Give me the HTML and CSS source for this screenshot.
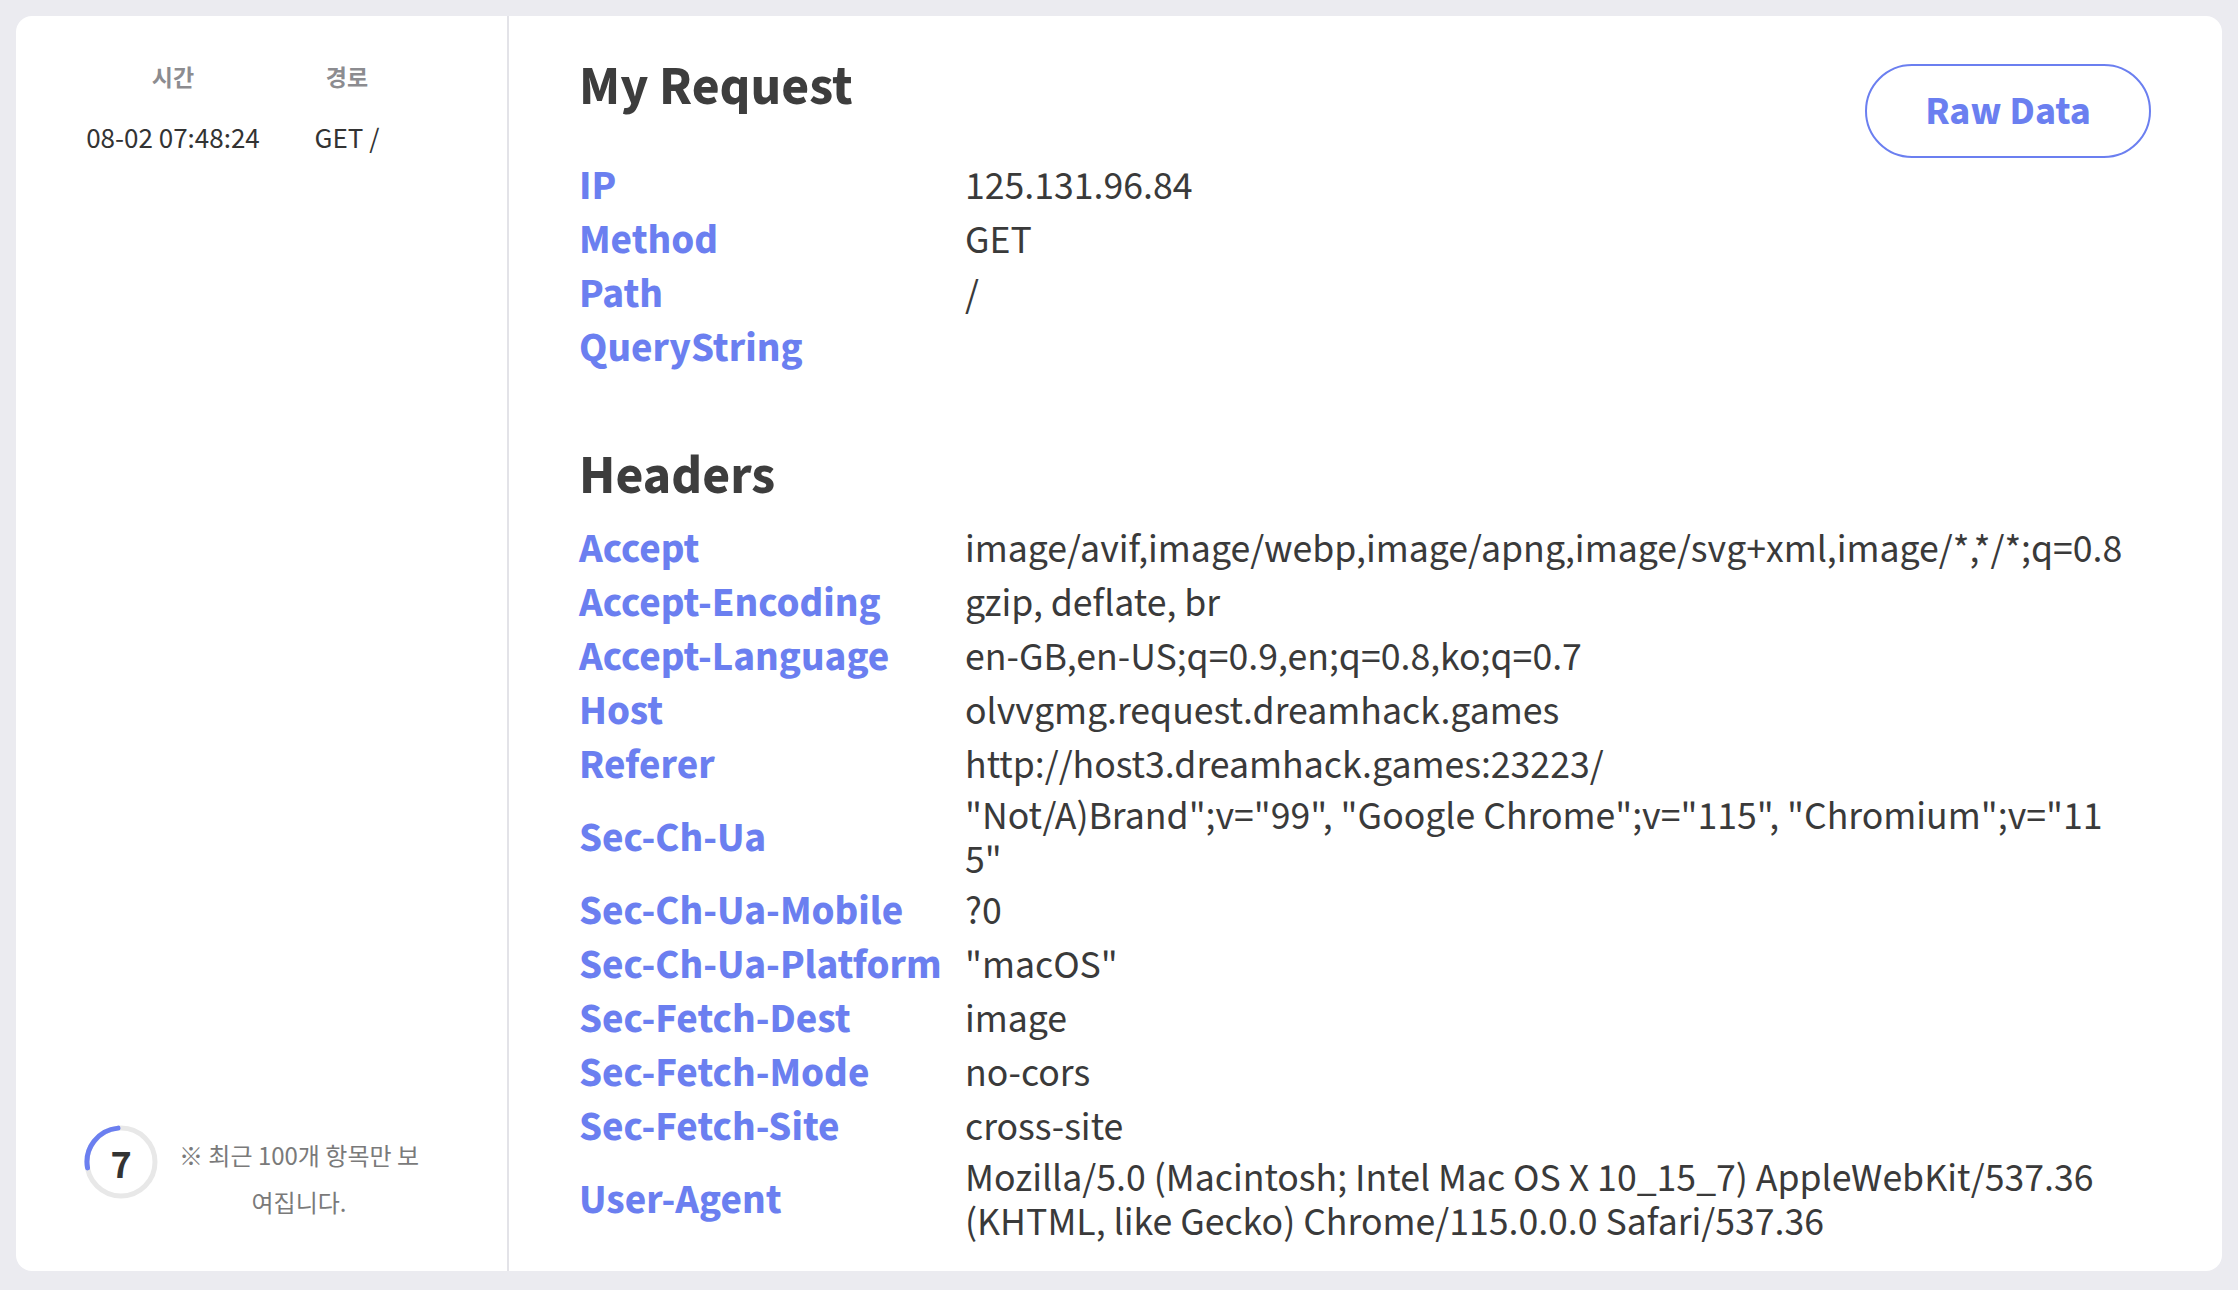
FILE: index.html
```html
<!DOCTYPE html>
<html lang="en">
<head>
<meta charset="utf-8">
<title>My Request</title>
<link rel="stylesheet" href="styles.css">
</head>
<body>
<div class="card">
  <aside class="sidebar">
    <div class="log">
      <div class="log-head">시간</div>
      <div class="log-head">경로</div>
      <div class="log-cell">08-02 07:48:24</div>
      <div class="log-cell">GET /</div>
    </div>
    <div class="foot">
      <div class="timer">
        <svg class="ring" width="76" height="76" viewBox="0 0 76 76">
          <circle cx="38" cy="38" r="34" fill="none" stroke="#e8e8e8" stroke-width="5"/>
          <path d="M4.52 43.9 A34 34 0 0 1 35.04 4.13" fill="none" stroke="#6b7ff0" stroke-width="5" stroke-linecap="round"/>
        </svg>
        <span class="count">7</span>
      </div>
      <p class="note">※ 최근 100개 항목만 보여집니다.</p>
    </div>
  </aside>
  <main class="main">
    <div class="top">
      <h1 class="title">My Request</h1>
      <button class="raw">Raw Data</button>
    </div>
    <div class="rows">
      <div class="key">IP</div><div class="val">125.131.96.84</div>
      <div class="key">Method</div><div class="val">GET</div>
      <div class="key">Path</div><div class="val">/</div>
      <div class="key">QueryString</div><div class="val"></div>
    </div>
    <h2 class="title title-sub">Headers</h2>
    <div class="rows">
      <div class="key">Accept</div><div class="val">image/avif,image/webp,image/apng,image/svg+xml,image/*,*/*;q=0.8</div>
      <div class="key">Accept-Encoding</div><div class="val">gzip, deflate, br</div>
      <div class="key">Accept-Language</div><div class="val">en-GB,en-US;q=0.9,en;q=0.8,ko;q=0.7</div>
      <div class="key">Host</div><div class="val">olvvgmg.request.dreamhack.games</div>
      <div class="key">Referer</div><div class="val">http://host3.dreamhack.games:23223/</div>
      <div class="key">Sec-Ch-Ua</div><div class="val">"Not/A)Brand";v="99", "Google Chrome";v="115", "Chromium";v="115"</div>
      <div class="key">Sec-Ch-Ua-Mobile</div><div class="val">?0</div>
      <div class="key">Sec-Ch-Ua-Platform</div><div class="val">"macOS"</div>
      <div class="key">Sec-Fetch-Dest</div><div class="val">image</div>
      <div class="key">Sec-Fetch-Mode</div><div class="val">no-cors</div>
      <div class="key">Sec-Fetch-Site</div><div class="val">cross-site</div>
      <div class="key">User-Agent</div><div class="val">Mozilla/5.0 (Macintosh; Intel Mac OS X 10_15_7) AppleWebKit/537.36 (KHTML, like Gecko) Chrome/115.0.0.0 Safari/537.36</div>
    </div>
  </main>
</div>
</body>
</html>
```
FILE: styles.css
```css
* { box-sizing: border-box; }

html, body { height: 100%; }

body {
  margin: 0;
  padding: 16px 16px 21px;
  background: #ebebf0;
  font-family: "Noto Sans CJK KR", "Noto Sans", sans-serif;
  color: #3a3a3a;
}

.card {
  display: flex;
  background: #fff;
  border-radius: 16px;
  min-height: 1253px;
}

.sidebar {
  width: 493px;
  flex: none;
  border-right: 2px solid #e3e3e8;
  display: flex;
  flex-direction: column;
}

.log {
  display: grid;
  grid-template-columns: 234px 114px;
  padding: 45px 0 0 40px;
  row-gap: 31px;
}

.log-head {
  text-align: center;
  font-size: 23px;
  font-weight: 700;
  line-height: 30px;
  color: #8c8c90;
}

.log-cell {
  text-align: center;
  font-size: 26px;
  line-height: 30px;
  color: #333;
  white-space: nowrap;
}

.foot {
  margin-top: auto;
  display: flex;
  align-items: flex-start;
  padding: 0 0 46px 67px;
  gap: 14px;
}

.timer {
  position: relative;
  width: 76px;
  height: 76px;
  flex: none;
}

.ring { display: block; }

.count {
  position: absolute;
  inset: 0;
  display: flex;
  align-items: center;
  justify-content: center;
  font-size: 36px;
  font-weight: 700;
  color: #333;
}

.note {
  margin: 7px 0 0;
  width: 252px;
  text-align: center;
  font-size: 24px;
  line-height: 47px;
  color: #7a7a7a;
}

.main {
  flex: 1;
  padding: 40px 71px 24px 70px;
  font-family: "Source Sans Pro", "Source Sans 3", "Noto Sans CJK KR", sans-serif;
}

.top {
  display: flex;
  justify-content: space-between;
  align-items: flex-start;
  margin-bottom: 2px;
}

.title {
  margin: 0;
  font-size: 54px;
  line-height: 64px;
  font-weight: 700;
  color: #3d3d3d;
}

.title-sub {
  margin: 69px 0 14px;
}

.raw {
  margin-top: 8px;
  width: 286px;
  height: 94px;
  border: 2px solid #6b7ff0;
  border-radius: 47px;
  background: #fff;
  color: #6b7ff0;
  font-family: inherit;
  font-size: 40px;
  font-weight: 700;
}

.rows {
  display: grid;
  grid-template-columns: 386px 1162px;
  align-items: center;
}

.key {
  padding: 2px 0;
  font-size: 41.5px;
  line-height: 50px;
  font-weight: 700;
  color: #6b7ff0;
  white-space: nowrap;
}

.val {
  padding: 2px 0;
  font-size: 39.8px;
  line-height: 44px;
  color: #3a3a3a;
  word-break: break-all;
}
```
